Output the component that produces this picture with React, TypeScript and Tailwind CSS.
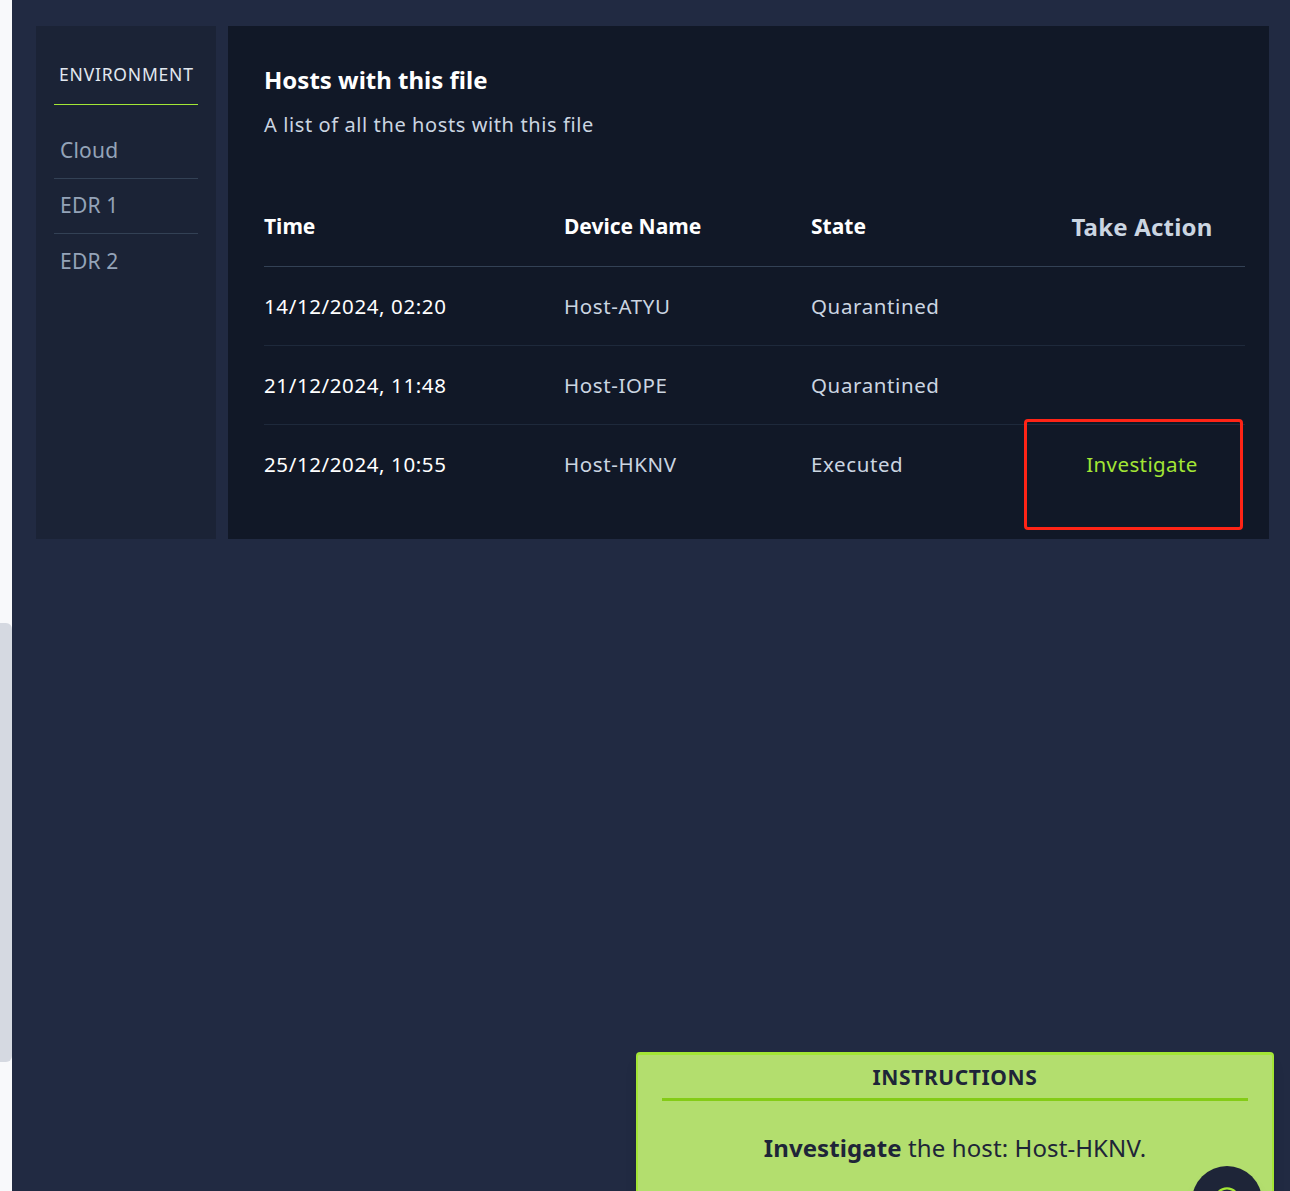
import React from "react";

const rows = [
  { time: "14/12/2024, 02:20", device: "Host-ATYU", state: "Quarantined", action: false },
  { time: "21/12/2024, 11:48", device: "Host-IOPE", state: "Quarantined", action: false },
  { time: "25/12/2024, 10:55", device: "Host-HKNV", state: "Executed", action: true },
];

export default function App() {
  return (
    <div
      className="min-h-screen flex bg-[#212a42] relative overflow-hidden"
      style={{ fontFamily: '"Noto Sans", "Open Sans", sans-serif' }}
    >
      <div className="w-[12px] shrink-0 bg-[#f8f9fb] flex flex-col">
        <div className="mt-[623px] h-[439px] w-[12px] bg-[#d5d9e1] rounded-r-[6px]" />
      </div>
      <div className="flex-1 pt-[26px] pl-[24px] pr-[21px]">
        <div className="flex gap-[12px] h-[513px]">
          <aside className="w-[180px] shrink-0 bg-[#1b2336] px-[18px] pt-[36px]">
            <div className="text-[17.5px] leading-[24px] text-[#e2e8f0] pl-[5px] pb-[18px] border-b border-[#a3e635] tracking-[0.8px]">
              ENVIRONMENT
            </div>
            <div className="mt-[19px] flex flex-col">
              {["Cloud", "EDR 1", "EDR 2"].map((t, i) => (
                <div
                  key={t}
                  className={`h-[55px] flex items-center pl-[6px] text-[21px] text-[#94a3b8] tracking-[0.2px] ${
                    i < 2 ? "border-b border-[#334155]" : ""
                  }`}
                >
                  {t}
                </div>
              ))}
            </div>
          </aside>
          <main className="flex-1 bg-[#111827] pl-[36px] pr-[24px] pt-[38px]">
            <h1 className="text-[24px] leading-[32px] font-bold text-white">Hosts with this file</h1>
            <p className="mt-[15px] text-[20px] leading-[28px] text-[#cbd5e1] tracking-[0.6px]">
              A list of all the hosts with this file
            </p>
            <div className="mt-[49px]">
              <div className="grid grid-cols-[300px_247px_213px_221px] h-[79px] items-center border-b border-[#334155]">
                <div className="text-[21px] font-bold text-white">Time</div>
                <div className="text-[21px] font-bold text-white">Device Name</div>
                <div className="text-[21px] font-bold text-white">State</div>
                <div className="text-[24px] font-bold text-[#cbd5e1] text-center pl-[15px] tracking-[0.2px]">Take Action</div>
              </div>
              {rows.map((r, i) => (
                <div
                  key={r.time}
                  className={`grid grid-cols-[300px_247px_213px_221px] h-[79px] items-center text-[20.5px] tracking-[0.6px] ${
                    i < rows.length - 1 ? "border-b border-[#1e293b]" : ""
                  }`}
                >
                  <div className="text-white">{r.time}</div>
                  <div className="text-[#cbd5e1]">{r.device}</div>
                  <div className="text-[#cbd5e1]">{r.state}</div>
                  <div className="relative h-full flex items-center justify-center pl-[15px]">
                    {r.action && (
                      <>
                        <span className="text-[#a3e635] tracking-[0.4px]">Investigate</span>
                        <div className="absolute left-0 right-[2px] top-[-6px] bottom-[-26px] border-[3px] border-[#ff2416] rounded-[4px]" />
                      </>
                    )}
                  </div>
                </div>
              ))}
            </div>
          </main>
        </div>
      </div>

      <div className="absolute left-[636px] top-[1052px] w-[638px] h-[200px] bg-[#b3de6e] border-t-[3px] border-x-[2px] border-[#a3e635] rounded-t-[4px] shadow-lg">
        <div className="text-center text-[21px] leading-[26px] font-bold text-[#1e2538] pt-[9px] tracking-[0.6px]">INSTRUCTIONS</div>
        <div className="mx-[24px] mt-[8px] h-[3px] bg-[#84cc16]" />
        <div className="text-center text-[24px] leading-[32px] text-[#1e2538] mt-[31px] tracking-[0.1px]">
          <span className="font-bold">Investigate</span> the host: Host-HKNV.
        </div>
      </div>
      <div className="absolute left-[1192px] top-[1166px] w-[70px] h-[70px] rounded-full bg-[#1e2538] flex items-start justify-center shadow-lg">
        <svg width="28" height="28" viewBox="0 0 24 24" fill="none" stroke="#a3e635" strokeWidth="2" className="mt-[20px]">
          <circle cx="12" cy="12" r="10" />
        </svg>
      </div>
    </div>
  );
}
